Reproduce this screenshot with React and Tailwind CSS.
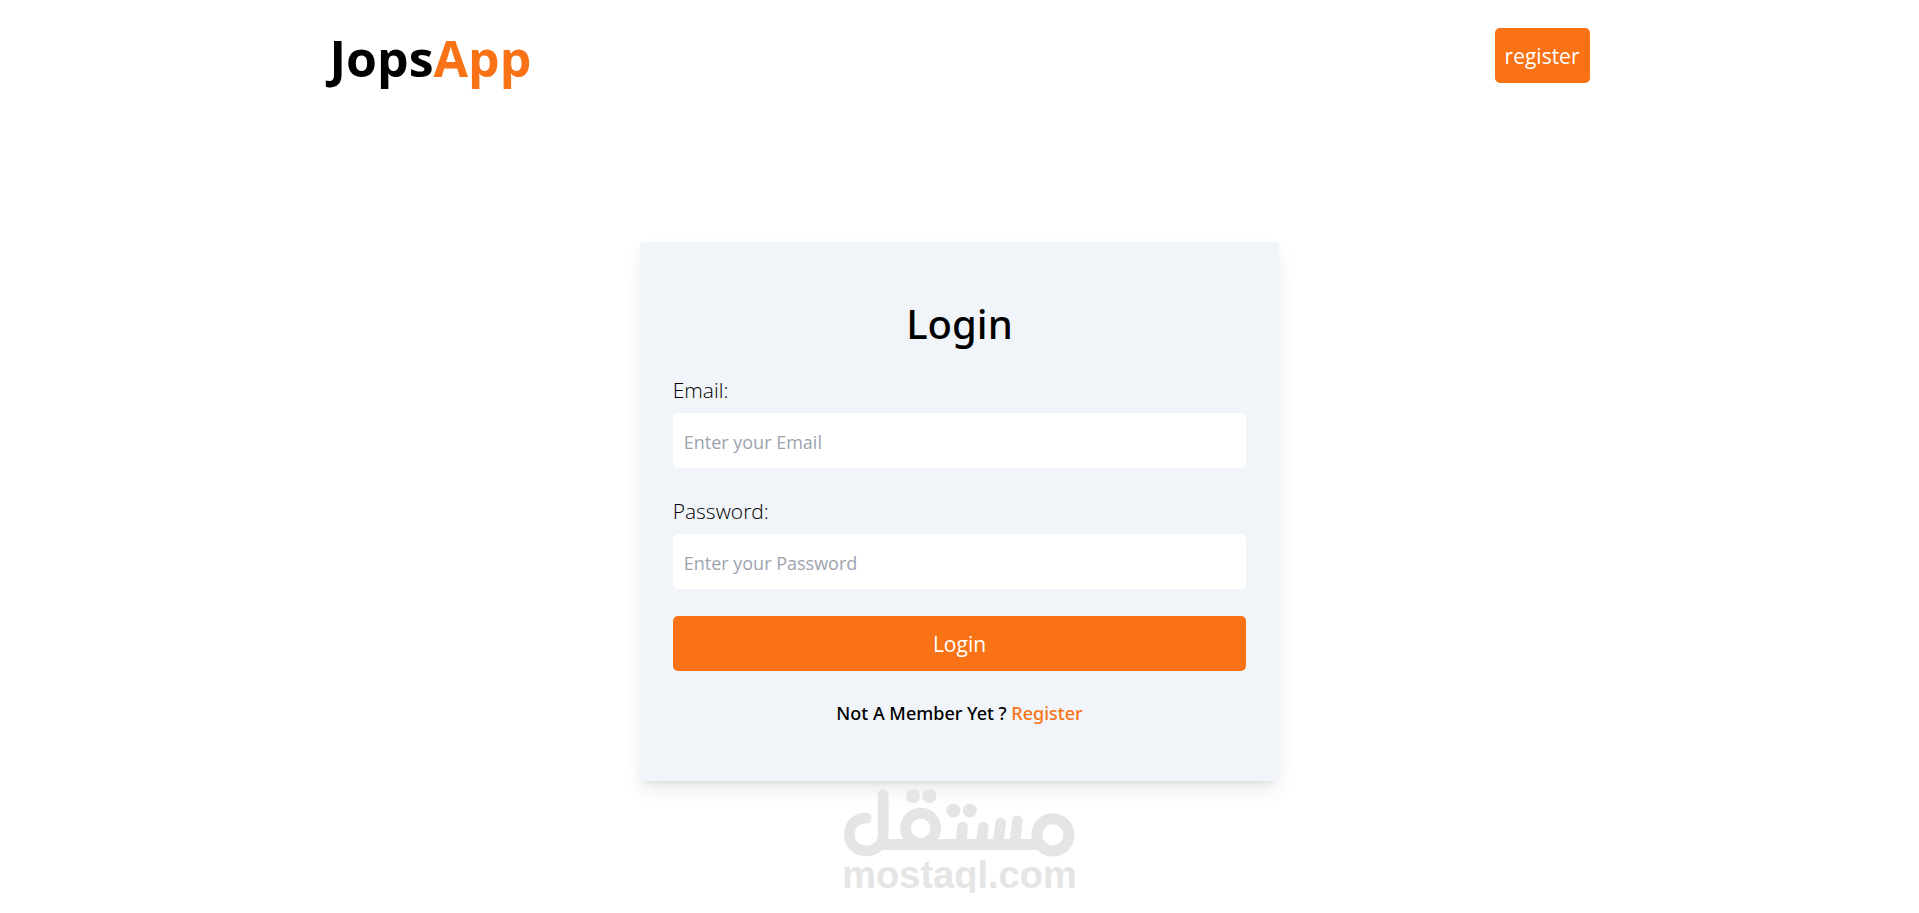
import React, { useState } from "react";

function Header() {
  return (
    <header className="w-full max-w-[1260px] mx-auto pt-7 flex items-start justify-between">
      <h1 className="text-[50px] leading-[60px] font-bold text-black">
        Jops<span className="text-[#f97316]">App</span>
      </h1>
      <button
        type="button"
        className="bg-[#f97316] text-white text-[21px] leading-[33px] px-[10px] pt-3 pb-[10px] rounded-[5px]"
      >
        register
      </button>
    </header>
  );
}

function Field({ id, label, type, placeholder, value, onChange }) {
  return (
    <div className="flex flex-col gap-[6px]">
      <label htmlFor={id} className="text-[21px] leading-[33px] font-light text-black">
        {label}
      </label>
      <input
        id={id}
        type={type}
        placeholder={placeholder}
        value={value}
        onChange={onChange}
        className="w-full h-[55px] bg-white rounded-[5px] px-[11px] pt-[2px] text-[18px] placeholder:text-[#9ca3af] outline-none"
      />
    </div>
  );
}

function Mostaql() {
  return (
    <div className="w-[231px] mx-auto mt-2 text-[#e5e5e5]">
      <svg viewBox="72 57 690 202" className="block w-full" fill="none" stroke="currentColor">
        {/* lam */}
        <path
          d="M138 144 C108 142 88 164 88 194 C88 222 110 242 138 242 C168 242 189 222 189 192 V73"
          strokeWidth="32"
          strokeLinecap="round"
        />
        {/* base line */}
        <path d="M180 223 H660" strokeWidth="33" />
        {/* qaf */}
        <circle cx="301" cy="174" r="45" strokeWidth="32" />
        {/* meem */}
        <circle cx="696" cy="194" r="48" strokeWidth="33" />
        {/* teeth */}
        <path
          d="M426 171 L421 222 M488 171 L482 222 M540 159 L532 222 M590 152 L582 222"
          strokeWidth="32"
          strokeLinecap="round"
        />
        <g fill="currentColor" stroke="none">
          <circle cx="278" cy="78" r="21" />
          <circle cx="327" cy="78" r="21" />
          <circle cx="399" cy="121" r="21" />
          <circle cx="448" cy="121" r="21" />
        </g>
      </svg>
      <p className="font-['Liberation_Sans',Arial,sans-serif] font-bold text-[38px] leading-[36px] flex justify-center whitespace-nowrap">
        mostaql.com
      </p>
    </div>
  );
}

function App() {
  const [email, setEmail] = useState("");
  const [password, setPassword] = useState("");

  const handleSubmit = (e) => {
    e.preventDefault();
  };

  return (
    <div className="w-full bg-white font-['Open_Sans','Noto_Sans',sans-serif]">
      <Header />

      <main className="mt-[154px]">
        {/* LOGIN CARD */}
        <form
          onSubmit={handleSubmit}
          className="w-1/3 mx-auto bg-[#f1f5f9] rounded-xs shadow-[0_10px_20px_-3px_rgba(0,0,0,0.1),0_4px_7px_-4px_rgba(0,0,0,0.1)] px-[33px] py-[54px]"
        >
          <h2 className="font-['Noto_Sans',sans-serif] text-[40px] leading-[55px] font-medium text-center text-black">
            Login
          </h2>

          <div className="mt-[23px] flex flex-col gap-[27px]">
            <Field
              id="email"
              label="Email:"
              type="email"
              placeholder="Enter your Email"
              value={email}
              onChange={(e) => setEmail(e.target.value)}
            />
            <Field
              id="password"
              label="Password:"
              type="password"
              placeholder="Enter your Password"
              value={password}
              onChange={(e) => setPassword(e.target.value)}
            />
            <button
              type="submit"
              className="w-full bg-[#f97316] text-white text-[21px] leading-[33px] px-[10px] pt-3 pb-[10px] rounded-[5px]"
            >
              Login
            </button>
          </div>

          <p className="mt-7 font-['Noto_Sans',sans-serif] text-[18px] leading-7 font-medium text-center text-black">
            Not A Member Yet ?{" "}
            <a href="#register" className="text-[#f97316]">
              Register
            </a>
          </p>
        </form>

        <Mostaql />
      </main>
    </div>
  );
}

export default App;
